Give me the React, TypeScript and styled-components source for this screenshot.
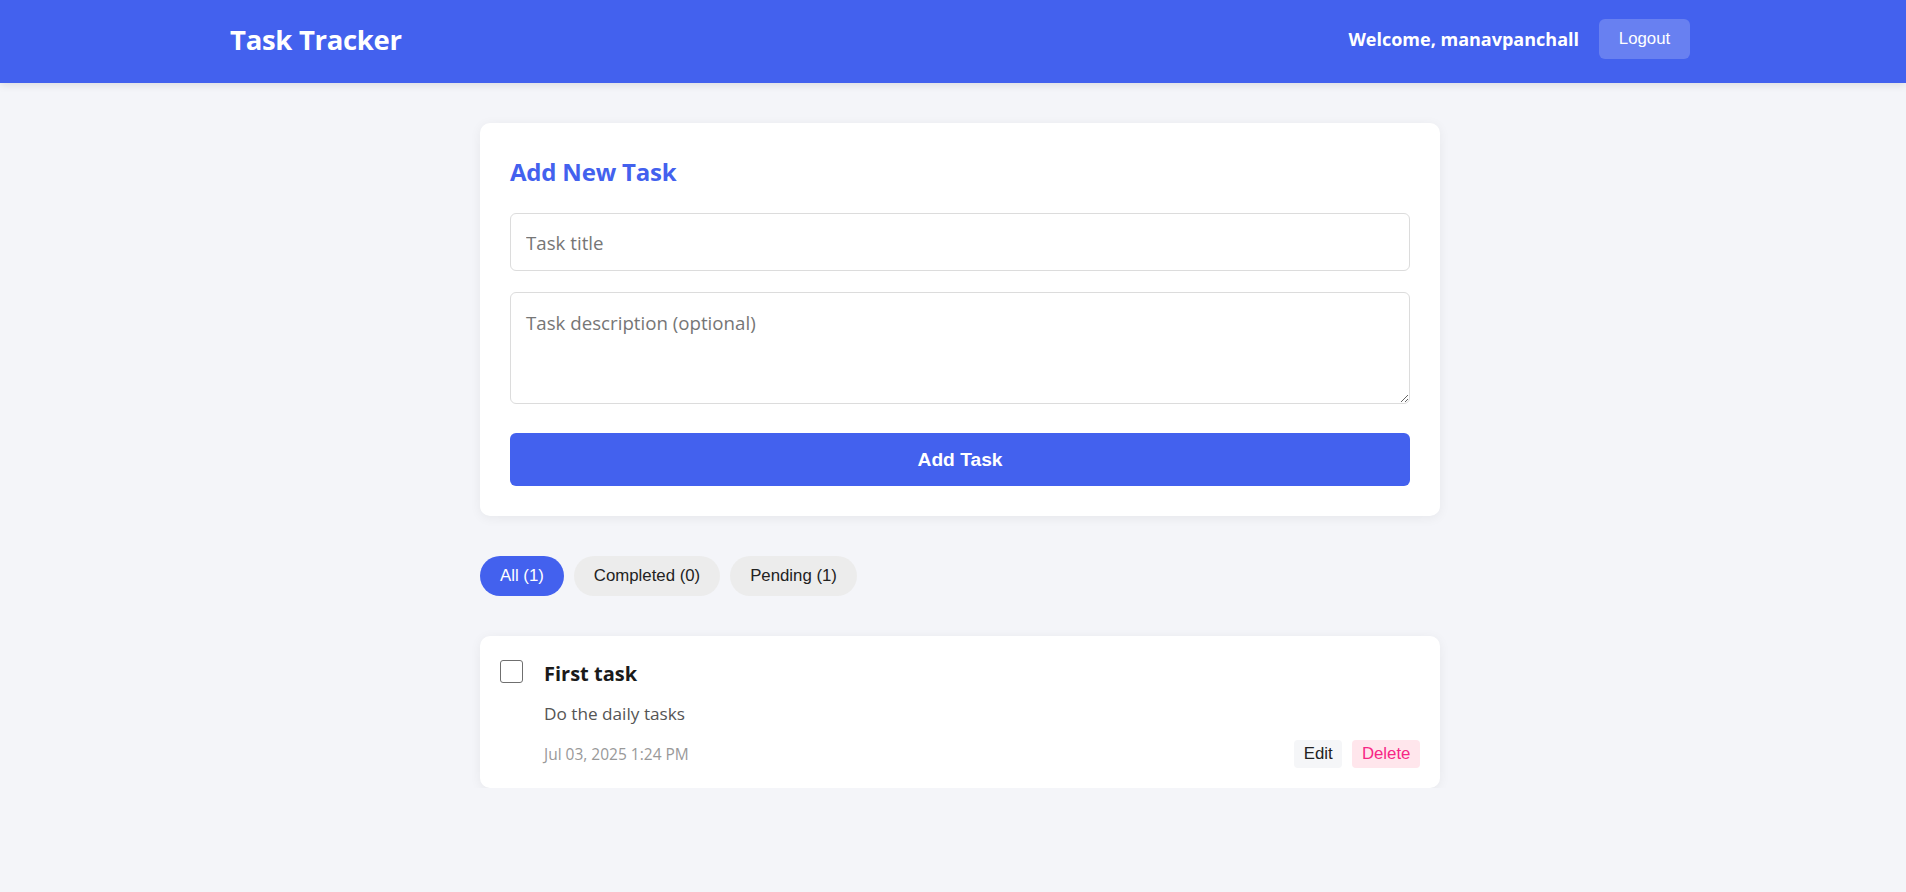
import React from "react";
import styled, { createGlobalStyle } from "styled-components";

const GlobalStyle = createGlobalStyle`
  html, body { margin: 0; padding: 0; }
  body {
    background: #f4f5f9;
    font-family: "Open Sans", "Noto Sans", sans-serif;
    color: #222;
  }
  * { box-sizing: border-box; }
`;

const Header = styled.header`
  height: 83px;
  padding-bottom: 5px;
  background: #4361ee;
  box-shadow: 0 2px 8px rgba(0, 0, 0, 0.1);
  display: flex;
  align-items: center;
`;

const HeaderInner = styled.div`
  width: 1460px;
  margin-left: 230px;
  display: flex;
  align-items: center;
  justify-content: space-between;
`;

const Brand = styled.h1`
  margin: 0;
  font-size: 27.5px;
  font-weight: 700;
  color: #fff;
  letter-spacing: -0.3px;
`;

const UserBox = styled.div`
  display: flex;
  align-items: center;
  gap: 20px;
`;

const Welcome = styled.span`
  font-size: 18px;
  font-weight: 700;
  color: #fff;
`;

const LogoutButton = styled.button`
  height: 40px;
  width: 91px;
  border: none;
  border-radius: 6px;
  background: rgba(255, 255, 255, 0.2);
  color: #fff;
  font-family: "Liberation Sans", Arial, sans-serif;
  font-size: 16.8px;
  cursor: pointer;
`;

const Main = styled.main`
  width: 960px;
  margin-left: 480px;
  padding-top: 40px;
  display: flex;
  flex-direction: column;
  gap: 40px;
`;

const Card = styled.section`
  background: #fff;
  border-radius: 10px;
  box-shadow: 0 2px 12px rgba(0, 0, 0, 0.06);
  padding: 30px;
  display: flex;
  flex-direction: column;
`;

const CardTitle = styled.h2`
  margin: 0 0 22px;
  font-size: 24px;
  line-height: 38px;
  font-weight: 700;
  color: #4361ee;
  letter-spacing: -0.2px;
`;

const fieldBase = `
  width: 100%;
  border: 1px solid #dcdcdc;
  border-radius: 6px;
  padding: 15px 15px 14px;
  font-family: "Open Sans", "Noto Sans", sans-serif;
  font-size: 18.7px;
  line-height: 27px;
  color: #222;
  background: #fff;
  &::placeholder { color: #767676; }
  &:focus { outline: none; }
`;

const TextInput = styled.input`
  ${fieldBase}
  height: 58px;
  margin-bottom: 21px;
`;

const TextArea = styled.textarea`
  ${fieldBase}
  height: 112px;
  padding-top: 16px;
  resize: vertical;
  margin-bottom: 29px;
  display: block;
`;

const PrimaryButton = styled.button`
  height: 53px;
  width: 100%;
  border: none;
  border-radius: 6px;
  background: #4361ee;
  color: #fff;
  font-family: "Liberation Sans", Arial, sans-serif;
  font-size: 19.2px;
  font-weight: 700;
  cursor: pointer;
`;

const FilterRow = styled.div`
  display: flex;
  gap: 10px;
`;

const Pill = styled.button<{ $active?: boolean }>`
  height: 40px;
  padding: 0 20px;
  border: none;
  border-radius: 20px;
  background: ${(p) => (p.$active ? "#4361ee" : "#ececec")};
  color: ${(p) => (p.$active ? "#fff" : "#222")};
  font-family: "Liberation Sans", Arial, sans-serif;
  font-size: 16.8px;
  cursor: pointer;
`;

const TaskCard = styled.article`
  background: #fff;
  border-radius: 10px;
  box-shadow: 0 2px 12px rgba(0, 0, 0, 0.06);
  padding: 24px 20px 20px 20px;
  display: flex;
  gap: 21px;
`;

const Check = styled.input.attrs({ type: "checkbox" })`
  appearance: none;
  -webkit-appearance: none;
  width: 23px;
  height: 23px;
  margin: 0;
  flex: none;
  border: 1.5px solid #6f6f6f;
  border-radius: 3px;
  background: #fff;
  cursor: pointer;
`;

const TaskBody = styled.div`
  flex: 1;
  display: flex;
  flex-direction: column;
`;

const TaskTitle = styled.h3`
  margin: -3.5px 0 0;
  font-size: 20px;
  line-height: 34px;
  font-weight: 700;
  color: #1a1a1a;
`;

const TaskDesc = styled.p`
  margin: 10.5px 0 0;
  font-size: 17.2px;
  line-height: 26px;
  color: #555;
`;

const TaskFooter = styled.div`
  margin-top: 13px;
  display: flex;
  align-items: center;
  justify-content: space-between;
`;

const TaskDate = styled.span`
  font-size: 15.5px;
  color: #999;
`;

const Actions = styled.div`
  display: flex;
  gap: 10px;
`;

const SmallButton = styled.button<{ $danger?: boolean }>`
  height: 28px;
  padding: 0 9.6px;
  border: none;
  border-radius: 4px;
  background: ${(p) => (p.$danger ? "#ffe6ec" : "#f5f6f8")};
  color: ${(p) => (p.$danger ? "#f72585" : "#222")};
  font-family: "Liberation Sans", Arial, sans-serif;
  font-size: 16.8px;
  cursor: pointer;
`;

export default function App() {
  return (
    <>
      <GlobalStyle />
      <Header>
        <HeaderInner>
          <Brand>Task Tracker</Brand>
          <UserBox>
            <Welcome>Welcome, manavpanchall</Welcome>
            <LogoutButton>Logout</LogoutButton>
          </UserBox>
        </HeaderInner>
      </Header>
      <Main>
        <Card>
          <CardTitle>Add New Task</CardTitle>
          <TextInput placeholder="Task title" />
          <TextArea placeholder="Task description (optional)" />
          <PrimaryButton>Add Task</PrimaryButton>
        </Card>
        <FilterRow>
          <Pill $active>All (1)</Pill>
          <Pill>Completed (0)</Pill>
          <Pill>Pending (1)</Pill>
        </FilterRow>
        <TaskCard>
          <Check />
          <TaskBody>
            <TaskTitle>First task</TaskTitle>
            <TaskDesc>Do the daily tasks</TaskDesc>
            <TaskFooter>
              <TaskDate>Jul 03, 2025 1:24 PM</TaskDate>
              <Actions>
                <SmallButton>Edit</SmallButton>
                <SmallButton $danger>Delete</SmallButton>
              </Actions>
            </TaskFooter>
          </TaskBody>
        </TaskCard>
      </Main>
    </>
  );
}
